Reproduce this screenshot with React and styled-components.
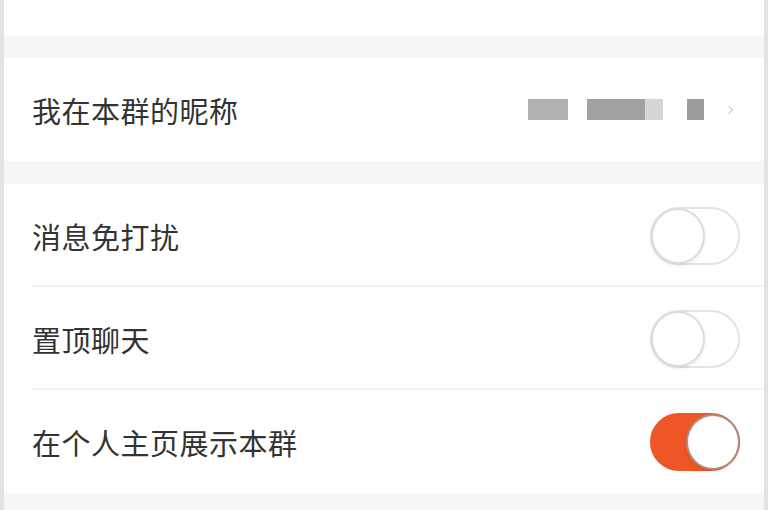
import React, { useState } from 'react'
import styled, { createGlobalStyle } from 'styled-components'

const GlobalStyle = createGlobalStyle`
  html, body {
    margin: 0;
    padding: 0;
    background: #e3e3e3;
  }
  body {
    font-family: "Noto Sans CJK SC", "Noto Sans", sans-serif;
  }
`

const Page = styled.div`
  margin: 0 4px 0 4px;
  height: 510px;
  background: #f6f6f8;
  display: flex;
  flex-direction: column;
  overflow: hidden;
`

const TopStrip = styled.div`
  height: 36px;
  background: #fff;
`

const Gap = styled.div`
  height: ${p => p.size}px;
`

const Group = styled.div`
  background: #fff;
  display: flex;
  flex-direction: column;
`

const Row = styled.div`
  height: 103px;
  display: flex;
  align-items: center;
  justify-content: space-between;
  padding: 0 20px 0 28px;
`

const RowWrap = styled.div`
  position: relative;
  &:not(:last-child)::after {
    content: '';
    position: absolute;
    left: 28px;
    right: 0;
    bottom: 0;
    height: 2px;
    background: #f3f3f5;
  }
`

const Label = styled.span`
  font-size: 29px;
  color: #333;
  letter-spacing: 0.5px;
`

const Value = styled.div`
  display: flex;
  align-items: center;
  margin-right: 12px;
`

const Blur = styled.span`
  display: inline-block;
  width: ${p => p.w}px;
  height: 21px;
  margin-left: ${p => p.ml || 0}px;
  background: ${p => p.c};
  filter: blur(0.6px);
`

const Chevron = styled.span`
  display: inline-block;
  width: 5px;
  height: 5px;
  margin-left: 22px;
  border-top: 1.5px solid #c8c8c8;
  border-right: 1.5px solid #c8c8c8;
  transform: rotate(45deg);
`

const Track = styled.button`
  width: 90px;
  height: 58px;
  margin-right: 4px;
  border-radius: 30px;
  padding: 0;
  box-sizing: border-box;
  cursor: pointer;
  position: relative;
  border: 2px solid ${p => (p.on ? '#ee5626' : '#e4e4e6')};
  background: ${p => (p.on ? '#ee5626' : '#fff')};
  outline: none;
`

const Knob = styled.span`
  position: absolute;
  top: -1px;
  left: ${p => (p.on ? '34px' : '-1px')};
  width: 54px;
  height: 56px;
  box-sizing: border-box;
  border-radius: 50%;
  background: #fff;
  border: 2px solid ${p => (p.on ? '#b58a7c' : '#dcdcde')};
  box-shadow: 0 2px 3px rgba(0, 0, 0, 0.08);
`

function Toggle({ on, onClick }) {
  return (
    <Track on={on} onClick={onClick}>
      <Knob on={on} />
    </Track>
  )
}

export default function App() {
  const [switches, setSwitches] = useState({
    mute: false,
    top: false,
    show: true,
  })

  const flip = key => () => setSwitches(s => ({ ...s, [key]: !s[key] }))

  return (
    <>
      <GlobalStyle />
      <Page>
        <TopStrip />
        <Gap size={22} />
        <Group>
          <Row>
            <Label>我在本群的昵称</Label>
            <Value>
              <Blur w={40} c="#b0b0b0" />
              <Blur w={58} ml={19} c="#a2a2a2" />
              <Blur w={18} c="#d6d6d6" />
              <Blur w={17} ml={24} c="#9c9c9c" />
              <Chevron />
            </Value>
          </Row>
        </Group>
        <Gap size={23} />
        <Group>
          <RowWrap>
            <Row>
              <Label>消息免打扰</Label>
              <Toggle on={switches.mute} onClick={flip('mute')} />
            </Row>
          </RowWrap>
          <RowWrap>
            <Row>
              <Label>置顶聊天</Label>
              <Toggle on={switches.top} onClick={flip('top')} />
            </Row>
          </RowWrap>
          <RowWrap>
            <Row>
              <Label>在个人主页展示本群</Label>
              <Toggle on={switches.show} onClick={flip('show')} />
            </Row>
          </RowWrap>
        </Group>
      </Page>
    </>
  )
}
